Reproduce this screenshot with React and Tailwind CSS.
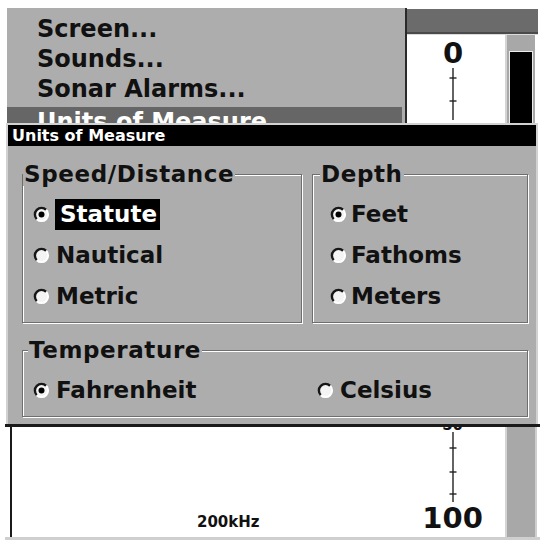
import React from "react";

// Small 3D radio dot like the sonar unit's dialog
function Radio({ on }) {
  return (
    <svg width="17" height="17" viewBox="0 0 17 17" className="shrink-0">
      <circle cx="8.5" cy="8.5" r="6.6" fill="#f4f4f4" />
      <path d="M3.83 13.17 A6.6 6.6 0 0 1 13.17 3.83" fill="none" stroke="#161616" strokeWidth="2.4" />
      <path d="M13.17 3.83 A6.6 6.6 0 0 1 3.83 13.17" fill="none" stroke="#ffffff" strokeWidth="2" />
      {on && <circle cx="8.5" cy="8.5" r="3" fill="#000" />}
    </svg>
  );
}

function Option({ label, on, active, gap = "ml-[6px]" }) {
  return (
    <div className="flex items-center h-[41px]">
      <Radio on={on} />
      {active ? (
        <span className="ml-[5px] pl-[5px] pr-[3px] h-[31px] leading-[31px] bg-black text-white">{label}</span>
      ) : (
        <span className={`${gap} leading-[31px]`}>{label}</span>
      )}
    </div>
  );
}

function Group({ title, legendGap = "ml-0", className = "", bodyClass = "", children }) {
  return (
    <div
      className={`border border-[#6e6e6e] shadow-[inset_1px_1px_0_#ffffff,1px_1px_0_#ffffff] pb-[5px] ${className}`}
    >
      <div className={`-mt-[13px] w-fit bg-[#adadad] px-[1px] h-[24px] leading-[24px] tracking-[0.6px] ${legendGap}`}>
        {title}
      </div>
      <div className={`mt-[8px] ${bodyClass}`}>{children}</div>
    </div>
  );
}

function Scale({ height, ticks }) {
  return (
    <svg width="14" height={height} viewBox={`0 0 14 ${height}`} className="block">
      <line x1="7" y1="0" x2="7" y2={height} stroke="#222" strokeWidth="1.4" />
      {ticks.map((t) => (
        <line key={t} x1="3.5" y1={t} x2="10.5" y2={t} stroke="#222" strokeWidth="1.4" />
      ))}
    </svg>
  );
}

export default function App() {
  return (
    <div className="w-[540px] h-[540px] overflow-hidden bg-white text-[#111] font-bold font-['DejaVu_Sans',sans-serif]">
      {/* top: settings menu + depth strip */}
      <div className="flex mt-[8px] h-[115px]">
        <div className="ml-[7px] w-[398px] bg-[#adadad] overflow-hidden text-[24px] pt-[5.5px]">
          <div className="pl-[30px] leading-[30px]">Screen...</div>
          <div className="pl-[30px] leading-[30px]">Sounds...</div>
          <div className="pl-[30px] leading-[30px]">Sonar Alarms...</div>
          <div className="mt-[3.5px] mr-[3px] pl-[30px] leading-[30px] bg-[#666666] text-white">Units of Measure</div>
        </div>
        <div className="w-[2px] bg-[#2a2a2a]" />
        <div className="w-[131px] flex flex-col">
          <div className="mt-[1px] h-[25px] bg-[#6b6b6b] border-b-2 border-[#4a4a4a]" />
          <div className="flex flex-1 border-t border-[#dcdcdc]">
            <div className="w-[98px] bg-white">
              <div className="ml-[36px] w-[20px] flex flex-col items-center">
                <div className="mt-[4px] text-[29px] leading-none">0</div>
                <Scale height={52} ticks={[10, 33]} />
              </div>
            </div>
            <div className="w-[30px] bg-[#a8a8a8] border-l-2 border-[#d4d4d4] flex flex-col">
              <div className="h-[16px]" />
              <div className="flex-1 mx-[2px] bg-black border border-b-0 border-[#ececec]" />
            </div>
          </div>
        </div>
      </div>

      {/* Units of Measure dialog */}
      <div className="ml-[6px] w-[532px] bg-[#adadad] border-x-2 border-t-2 border-[#d2d2d2]">
        <div className="h-[21px] bg-black text-white text-[16px] leading-[21px] pl-[4px]">Units of Measure</div>
        <div className="pt-[28px] pl-[14px] pr-[8px] pb-[7px] text-[23px]">
          <div className="flex gap-[10px]">
            <Group title="Speed/Distance" className="w-[280px]" bodyClass="pl-[10px]">
              <Option label="Statute" on active />
              <Option label="Nautical" />
              <Option label="Metric" />
            </Group>
            <Group title="Depth" legendGap="ml-[7px]" className="w-[216px]" bodyClass="pl-[17px]">
              <Option label="Feet" on gap="ml-[4px]" />
              <Option label="Fathoms" gap="ml-[4px]" />
              <Option label="Meters" gap="ml-[4px]" />
            </Group>
          </div>
          <Group title="Temperature" legendGap="ml-[5px]" className="mt-[27px]" bodyClass="pl-[10px] flex">
            <div className="w-[284px]">
              <Option label="Fahrenheit" on />
            </div>
            <Option label="Celsius" />
          </Group>
        </div>
      </div>

      {/* bottom: sonar window */}
      <div className="ml-[5px] h-[3px] bg-[#1a1a1a]" />
      <div className="flex h-[110px]">
        <div className="ml-[10px] w-[2px] bg-[#1a1a1a]" />
        <div className="w-[493px] bg-white flex">
          <div className="ml-[185px] mt-[86px] text-[15px] leading-[18px]">200kHz</div>
          <div className="ml-[163px] w-[60px] flex flex-col items-center">
            <div className="h-[5px] overflow-hidden">
              <div className="-mt-[9px] text-[15px] leading-none">50</div>
            </div>
            <Scale height={70} ticks={[16, 40, 62]} />
            <div className="mt-[2px] text-[29px] leading-none">100</div>
          </div>
        </div>
        <div className="w-[30px] bg-[#a8a8a8] border-l-2 border-[#d4d4d4]" />
        <div className="w-[2px] bg-[#cfcfcf]" />
      </div>
      <div className="ml-[5px] h-[3px] bg-[#cfcfcf]" />
    </div>
  );
}
